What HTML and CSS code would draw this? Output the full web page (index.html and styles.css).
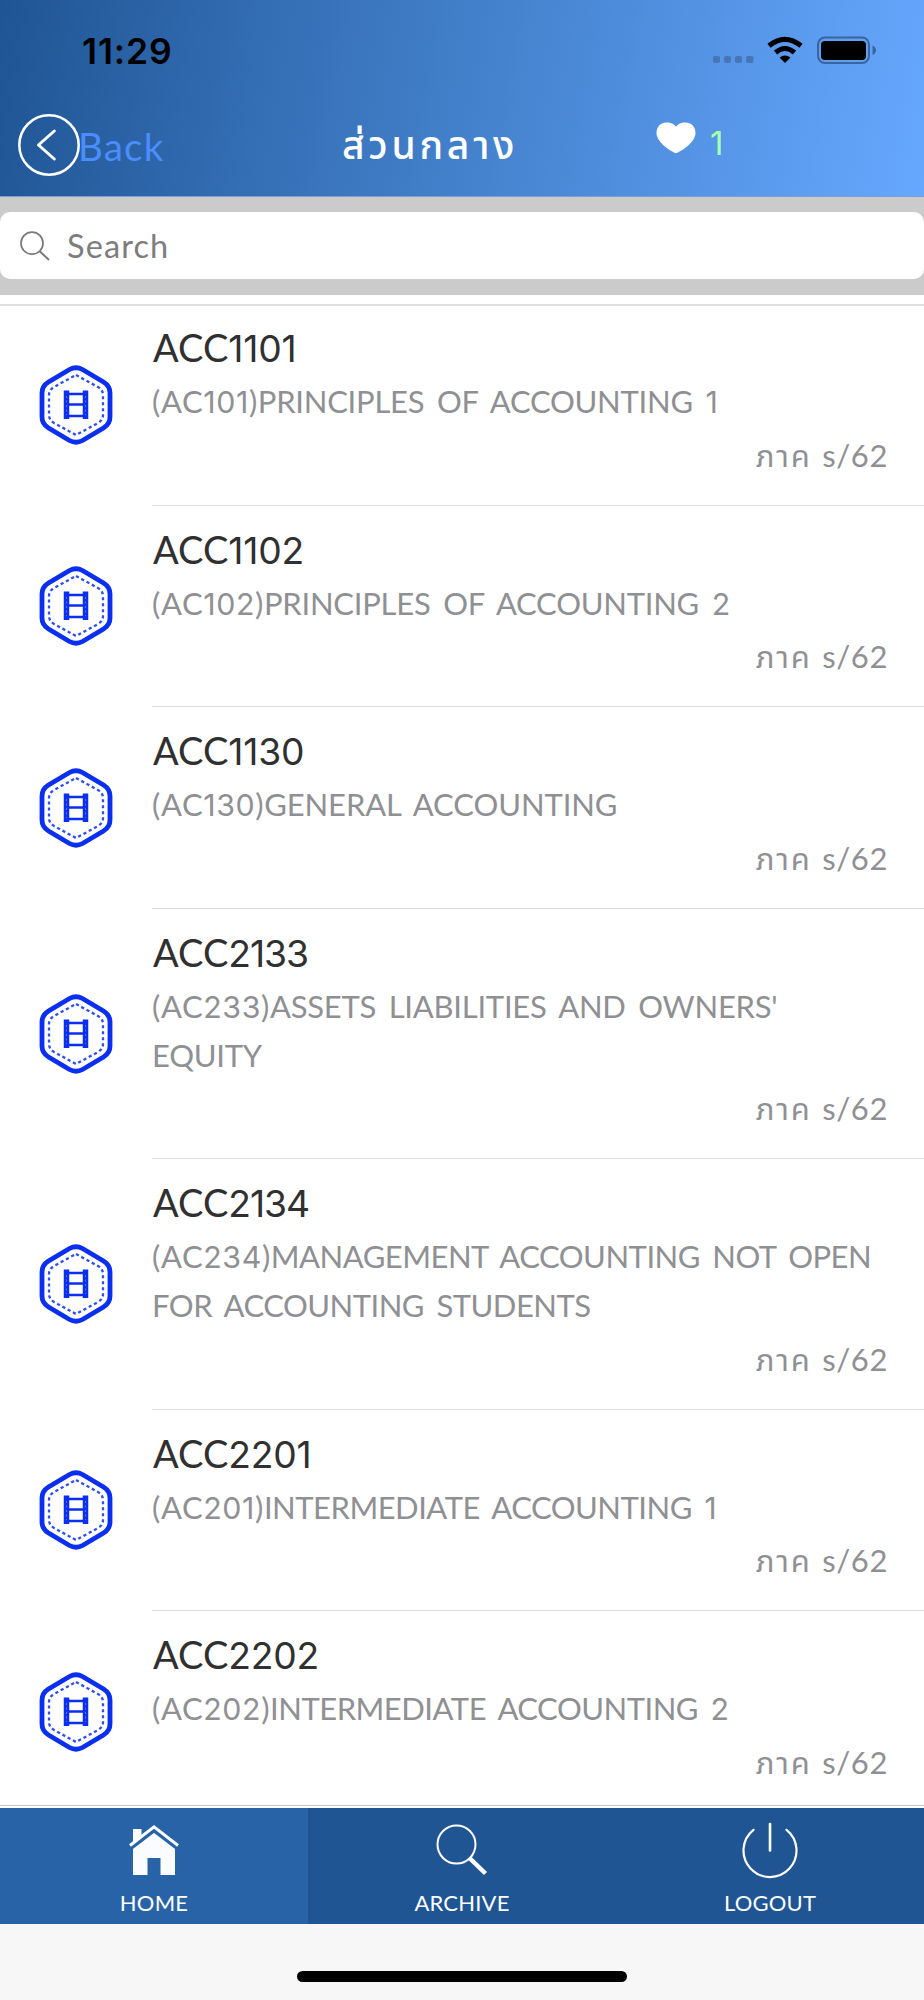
FILE: index.html
```
<!DOCTYPE html>
<html lang="th">
<head>
<meta charset="utf-8">
<title>ส่วนกลาง</title>
<link rel="stylesheet" href="styles.css">
</head>
<body>
<svg width="0" height="0" class="defs">
  <symbol id="film" viewBox="0 0 74 80">
    <g fill="none" stroke="#0a2ff0">
      <path stroke-width="4.800" d="M30.500 4.500 Q37 1 43.500 4.500 L64.500 17 Q71 21 71 28 V52 Q71 59 64.500 63 L43.500 75.500 Q37 79 30.500 75.500 L9.500 63 Q3 59 3 52 V28 Q3 21 9.500 17 L30.500 4.500Z"/>
      <path stroke-width="2.300" stroke-opacity=".85" stroke-dasharray="3.200 2.800" d="M37 10 L59 22 Q64 25 64 30 V50 Q64 55 59 58 L37 70 L15 58 Q10 55 10 50 V30 Q10 25 15 22Z"/>
      <path stroke-width="2.600" d="M28 29H46M28 39.500H46M28 51H46"/>
      <path stroke-width="5.500" d="M27.500 25.500V54M46.500 25.500V54"/>
    </g>
    <path stroke="#5a70f8" stroke-width="1" stroke-dasharray="2 2.500" d="M27.500 31V50M46.500 31V50"/>
  </symbol>
</svg>
<div class="screen">
  <header class="header">
    <div class="status">
      <span class="time">11:29</span>
      <svg class="status-icons" width="166" height="30" viewBox="0 0 166 30">
        <g fill="#4476b8"><rect x="1" y="20" width="7" height="7" rx="2"/><rect x="12" y="20" width="7" height="7" rx="2"/><rect x="23" y="20" width="7" height="7" rx="2"/><rect x="34" y="20" width="7.500" height="7" rx="2"/></g>
        <path d="M73 27 L67.500 21.500 Q73 17.500 78.500 21.500Z"/>
        <g fill="none" stroke="#000" stroke-width="5"><path d="M63.500 16.500 Q73 8.500 82.500 16.500"/><path d="M57 9.800 Q73 -3.200 89 9.800"/></g>
        <rect x="106" y="1.500" width="51" height="25.500" rx="7" fill="none" stroke="#3a659f" stroke-width="2"/>
        <rect x="109" y="5" width="45" height="19" rx="4"/>
        <path fill="#3a659f" d="M160.500 9.500 Q164 11 164 14.200 Q164 17.500 160.500 19Z"/>
      </svg>
    </div>
    <div class="nav">
      <div class="back">
        <svg width="62" height="62" viewBox="0 0 62 62" fill="none" stroke="#fff"><circle cx="31" cy="31" r="29.700" stroke-width="2.500"/><path stroke-width="3" stroke-linecap="round" stroke-linejoin="round" d="M36.300 17 L20.500 31 L36.300 45"/></svg>
        <span class="back-label">Back</span>
      </div>
      <h1 class="title">ส่วนกลาง</h1>
      <div class="likes">
        <svg width="40" height="32" viewBox="0 0 40 32"><path fill="#fff" d="M20 31.300 C14 29 .5 20 .5 11 C.5 4.500 5 .5 10.500 .5 C15 .5 19 2.500 20 5 C21 2.500 25 .5 29.500 .5 C35 .5 39.500 4.500 39.500 11 C39.500 20 26 29 20 31.300Z"/></svg>
        <span class="count">1</span>
      </div>
    </div>
  </header>
  <div class="searchbar">
    <div class="field">
      <svg width="30" height="30" viewBox="0 0 30 30" fill="none" stroke="#7a7a7a"><circle cx="12" cy="12.200" r="11" stroke-width="1.700"/><path stroke-width="2" d="M19.500 20 L29 29"/></svg>
      <span class="placeholder">Search</span>
    </div>
  </div>
  <main class="list">
    <article class="row"><svg class="badge"><use href="#film"/></svg><div class="body"><h2 class="code">ACC<span class="num">1101</span></h2><p class="name snug"><span class="ref">(AC<span class="num">101</span>)</span>PRINCIPLES OF ACCOUNTING <span class="num">1</span></p><p class="term"><span class="th">ภาค</span> s/62</p></div></article>
    <article class="row"><svg class="badge"><use href="#film"/></svg><div class="body"><h2 class="code">ACC<span class="num">1102</span></h2><p class="name snug"><span class="ref">(AC<span class="num">102</span>)</span>PRINCIPLES OF ACCOUNTING <span class="num">2</span></p><p class="term"><span class="th">ภาค</span> s/62</p></div></article>
    <article class="row"><svg class="badge"><use href="#film"/></svg><div class="body"><h2 class="code">ACC<span class="num">1130</span></h2><p class="name"><span class="ref">(AC<span class="num">130</span>)</span>GENERAL ACCOUNTING</p><p class="term"><span class="th">ภาค</span> s/62</p></div></article>
    <article class="row"><svg class="badge"><use href="#film"/></svg><div class="body"><h2 class="code narrow">ACC<span class="num">2133</span></h2><p class="name snug"><span class="ref">(AC<span class="num">233</span>)</span>ASSETS LIABILITIES AND OWNERS'<br>EQUITY</p><p class="term"><span class="th">ภาค</span> s/62</p></div></article>
    <article class="row"><svg class="badge"><use href="#film"/></svg><div class="body"><h2 class="code narrow">ACC<span class="num">2134</span></h2><p class="name tight"><span class="ref">(AC<span class="num">234</span>)</span>MANAGEMENT ACCOUNTING NOT OPEN<br>FOR ACCOUNTING STUDENTS</p><p class="term"><span class="th">ภาค</span> s/62</p></div></article>
    <article class="row"><svg class="badge"><use href="#film"/></svg><div class="body"><h2 class="code">ACC<span class="num">2201</span></h2><p class="name tight"><span class="ref">(AC<span class="num">201</span>)</span>INTERMEDIATE ACCOUNTING <span class="num">1</span></p><p class="term"><span class="th">ภาค</span> s/62</p></div></article>
    <article class="row"><svg class="badge"><use href="#film"/></svg><div class="body"><h2 class="code">ACC<span class="num">2202</span></h2><p class="name tight"><span class="ref">(AC<span class="num">202</span>)</span>INTERMEDIATE ACCOUNTING <span class="num">2</span></p><p class="term"><span class="th">ภาค</span> s/62</p></div></article>
  </main>
  <nav class="tabs">
    <div class="tab active">
      <svg width="60" height="60" viewBox="0 0 60 60"><path fill="#fafcff" d="M9 7H17.500V13L9 20Z M30 9.500 L51 26V53H36.500V36H23.500V53H9V26Z"/><path fill="none" stroke="#2863a7" stroke-width="4" d="M7 26 L30 8.500 L53 26"/><path fill="none" stroke="#fff" stroke-width="3" d="M6 23.500 L30 4.800 L54 23.500"/></svg>
      <span>HOME</span>
    </div>
    <div class="tab">
      <svg width="60" height="60" viewBox="0 0 60 60" fill="none" stroke="#fff"><circle cx="24.500" cy="22.500" r="19" stroke-width="2"/><path stroke-width="4.500" d="M38 36.500 L53.500 51.500"/></svg>
      <span>ARCHIVE</span>
    </div>
    <div class="tab">
      <svg width="60" height="60" viewBox="0 0 60 60" fill="none" stroke="#fff" stroke-linecap="round"><path stroke-width="2.200" d="M13.500 7.800 A26.500 26.500 0 1 0 46.500 7.800"/><path stroke-width="2.600" d="M30 2V28.500"/></svg>
      <span>LOGOUT</span>
    </div>
  </nav>
  <footer class="home-area"><div class="indicator"></div></footer>
</div>
</body>
</html>
```
FILE: styles.css
```
* { box-sizing: border-box; }
body { margin: 0; background: #fff; font-family: Lato, "Noto Sans Thai", "Noto Sans", sans-serif; }
h1, h2, p { margin: 0; font-weight: 400; }
svg { display: block; flex: none; overflow: visible; }
.defs { position: absolute; }
.screen { width: 924px; height: 2000px; display: flex; flex-direction: column; overflow: hidden; white-space: nowrap; }
.header { height: 197px; background: linear-gradient(100deg, #1f5594 0%, #4380cb 50%, #66a8ff 100%); border-bottom: 1px solid #7e9fcd; }
.status { height: 100px; padding: 36px 46px 0 82px; display: flex; justify-content: space-between; }
.time { font: 600 35.500px/31px Inter, sans-serif; letter-spacing: .9px; color: #000; }
.nav { display: flex; height: 96px; padding: 14px 0 0 18px; }
.back { display: flex; width: 324px; }
.back-label { font-size: 38.500px; line-height: 62px; padding-top: 1px; margin-left: -2px; color: #4b8cff; letter-spacing: 1.200px; }
.title { width: 314px; font-size: 39px; line-height: 60px; font-weight: 500; color: #fff; letter-spacing: 3.700px; }
.likes { display: flex; padding-top: 8px; gap: 14px; }
.count { font: 400 33px/43px Inter, sans-serif; color: #a9ffb0; }
.searchbar { height: 98px; background: #cbcbcb; padding: 15px 0 16px; }
.field { height: 67px; background: #fff; border-radius: 10px; display: flex; align-items: center; padding-left: 20px; gap: 17px; }
.placeholder { font-size: 32.500px; line-height: 40px; color: #7d7d7d; letter-spacing: 1.100px; }
.list { height: 1511px; padding-top: 9px; margin-bottom: 2px; border-bottom: 1px solid #c8c8cc; overflow: hidden; background: linear-gradient(#e0e0e0, #e0e0e0) 0 8.500px / 100% 2px no-repeat; }
.row { display: flex; align-items: center; padding-left: 39px; }
.badge { width: 74px; height: 80px; margin-right: 39px; }
.body { flex: 1; padding: 17px 36px 25px 0; border-bottom: 1px solid #dcdcde; }
.code { font-size: 38px; line-height: 52px; height: 56px; padding-left: 1px; color: #303030; }
.name { font-size: 31px; line-height: 49px; word-spacing: 5px; letter-spacing: -.1px; color: #8f9093; }
.snug { letter-spacing: -.25px; }
.tight { letter-spacing: -.500px; }
.num { font-family: Inter, sans-serif; font-size: .98em; line-height: 1; letter-spacing: -.2px; }
.narrow .num { letter-spacing: -1px; }
.ref { letter-spacing: .600px; }
.ref .num { letter-spacing: .600px; }
.term { font-size: 31px; line-height: 49px; padding-top: 4.500px; text-align: right; word-spacing: 2px; letter-spacing: .600px; color: #8f9093; }
.th { letter-spacing: 1.900px; }
.tabs { display: grid; grid-template-columns: repeat(3, 1fr); height: 116px; background: #205594; color: #fff; font-size: 22px; letter-spacing: .2px; }
.tab { display: flex; flex-direction: column; align-items: center; padding-top: 14px; line-height: 30px; gap: 6px; }
.active { background: #2863a7; }
.home-area { height: 76px; background: #f7f7f7; display: flex; justify-content: center; padding-top: 47px; }
.indicator { width: 330px; height: 11px; border-radius: 6px; background: #000; }
```
